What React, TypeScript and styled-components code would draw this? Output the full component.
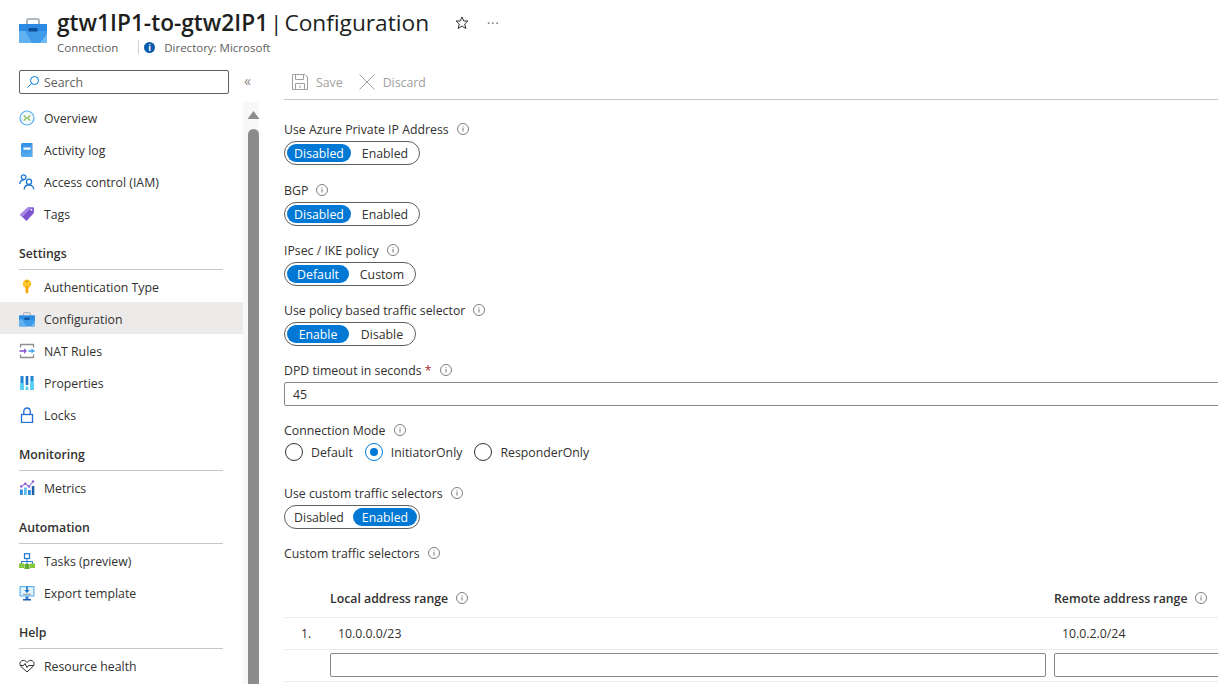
import React from "react";
import styled, { createGlobalStyle } from "styled-components";

const GlobalStyle = createGlobalStyle`
  html, body { margin: 0; padding: 0; background: #fff; }
  body {
    font-family: "Open Sans", "Noto Sans", sans-serif;
    font-size: 12.3px;
    color: #323130;
  }
  * { box-sizing: border-box; }
`;

const BriefcaseIcon = ({ size = 16 }: { size?: number }) => (
  <svg width={size} height={size} viewBox="0 0 28 28" fill="none">
    <path d="M8 9V4.200C8 3.500 8.500 3 9.200 3h9.600c.7 0 1.200.5 1.200 1.200V9" stroke="#9aa3ab" strokeWidth="1.600" />
    <rect x="0" y="8" width="28" height="19" rx="1.500" fill="#3f9bea" />
    <rect x="0" y="8" width="28" height="7" fill="#2a8ae4" />
    <path d="M0 15h6l7 12H1.500C.7 27 0 26.300 0 25.500z" fill="#62b2f2" />
    <path d="M21 27l7-9v7.500c0 .8-.7 1.500-1.500 1.500z" fill="#6fbaf4" />
    <rect x="9.500" y="12" width="9" height="3.500" fill="#0f4f97" />
  </svg>
);

const OverviewIcon = () => (
  <svg width="16" height="16" viewBox="0 0 16 16" fill="none">
    <circle cx="8" cy="8" r="7" stroke="#5aaef0" strokeWidth="1.200" fill="#f2f9fe" />
    <path d="M4.800 5.300L7.400 8 4.800 10.700" stroke="#7fba3c" strokeWidth="1.100" />
    <path d="M11.200 5.300L8.600 8l2.600 2.700" stroke="#7fba3c" strokeWidth="1.100" />
  </svg>
);

const LogIcon = () => (
  <svg width="16" height="16" viewBox="0 0 16 16">
    <defs>
      <linearGradient id="logFill" x1="0" y1="0" x2="0" y2="1">
        <stop offset="0" stopColor="#2f8fe4" />
        <stop offset="1" stopColor="#54aef2" />
      </linearGradient>
    </defs>
    <rect x="2" y="1" width="12" height="14" rx="1.500" fill="url(#logFill)" />
    <rect x="12.800" y="1.500" width="1.200" height="13" fill="#a9c6de" />
    <rect x="4.500" y="5.500" width="7" height="2.200" fill="#fff" />
  </svg>
);

const PeopleIcon = () => (
  <svg width="16" height="16" viewBox="0 0 16 16" fill="none" stroke="#1f78d8" strokeWidth="1.300">
    <circle cx="4.600" cy="3.200" r="2.300" />
    <path d="M.8 10c.2-2.300 1.600-4 3.800-4" />
    <circle cx="10" cy="7.800" r="2.600" />
    <path d="M5.200 15.500c0-2.800 2.100-4.500 4.800-4.500s4.800 1.700 4.800 4.500" />
  </svg>
);

const TagIcon = () => (
  <svg width="16" height="16" viewBox="0 0 16 16">
    <path d="M9 1.200h4.800c.6 0 1.100.5 1.100 1.100V7L7.500 15 .9 8.700z" fill="#7e54cf" />
    <path d="M.9 8.700L9 1.200l3 .3L3.500 11z" fill="#a98ae6" />
    <circle cx="12.300" cy="3.800" r="1" fill="#efe9fb" />
  </svg>
);

const KeyIcon = () => (
  <svg width="16" height="16" viewBox="0 0 16 16">
    <circle cx="8" cy="4.800" r="4.300" fill="#fdc62d" />
    <path d="M6.500 7h3v3l-.7.7.7.7v1.100L8 15l-1.500-2z" fill="#f5a800" />
    <rect x="6.700" y="1.800" width="2.600" height="1.200" rx=".6" fill="#b98b00" />
  </svg>
);

const NatIcon = () => (
  <svg width="16" height="16" viewBox="0 0 16 16" fill="none">
    <path d="M1.500 1.500h13M1.500 14.500h13M1.500 1v3.500M14.500 1v3.500M1.500 11.500V15M14.500 11.500V15" stroke="#8f8f8f" strokeWidth="1.300" />
    <path d="M.5 8h6" stroke="#8a5fd8" strokeWidth="1.700" />
    <path d="M5 5.300L8 8l-3 2.700z" fill="#8a5fd8" />
    <path d="M9.500 8h6" stroke="#46a8f0" strokeWidth="1.700" />
    <path d="M12.500 5.300L15.500 8l-3 2.700z" fill="#46a8f0" />
  </svg>
);

const BarsIcon = () => (
  <svg width="16" height="16" viewBox="0 0 16 16">
    <rect x="1.500" y="1" width="3" height="14" fill="#1b83d4" />
    <rect x="1.500" y="8" width="3" height="7" fill="#50d4f4" />
    <rect x="6.700" y="1" width="2.600" height="9" fill="#1b6ec2" />
    <rect x="6.700" y="11.500" width="2.600" height="3.500" fill="#50d4f4" />
    <rect x="11.500" y="1" width="3" height="14" fill="#1b83d4" />
    <rect x="11.500" y="6" width="3" height="9" fill="#50d4f4" />
  </svg>
);

const LockIcon = () => (
  <svg width="16" height="16" viewBox="0 0 16 16" fill="none" stroke="#1f6fd8" strokeWidth="1.300">
    <rect x="2.500" y="7.500" width="11" height="8" />
    <path d="M4.800 7.500V4.200a3.200 3.200 0 016.400 0v3.300" />
  </svg>
);

const MetricsIcon = () => (
  <svg width="16" height="16" viewBox="0 0 16 16">
    <rect x="1" y="9.500" width="2.800" height="5.500" fill="#2d8ad8" />
    <rect x="5" y="7.500" width="2.800" height="7.500" fill="#5ec0f0" />
    <rect x="9" y="10" width="2.800" height="5" fill="#2d8ad8" />
    <rect x="12.800" y="6" width="2.500" height="9" fill="#1a5fa8" />
    <path d="M2.200 6.500L6.200 3.700 10 6.500l4-5" stroke="#9a78dc" strokeWidth="1.100" fill="none" />
    <circle cx="2.200" cy="6.500" r="1.200" fill="#8a5fd8" />
    <circle cx="6.200" cy="3.700" r="1.200" fill="#8a5fd8" />
    <circle cx="10" cy="6.500" r="1.200" fill="#8a5fd8" />
    <circle cx="14" cy="1.500" r="1.200" fill="#8a5fd8" />
  </svg>
);

const TasksIcon = () => (
  <svg width="16" height="16" viewBox="0 0 16 16">
    <path d="M8 5.500V11M2.500 11V8.500h11V11" stroke="#1f78d8" fill="none" />
    <rect x="5.500" y="0.700" width="5" height="4.800" fill="#fff" stroke="#1f78d8" strokeWidth="1.200" />
    <rect x="0" y="10.500" width="5" height="4.500" fill="#86c83a" />
    <rect x="5.500" y="11" width="5" height="5" fill="#5ea82a" />
    <rect x="11" y="10.500" width="5" height="4.500" fill="#86c83a" />
  </svg>
);

const ExportIcon = () => (
  <svg width="16" height="16" viewBox="0 0 16 16">
    <rect x="0.500" y="1" width="15" height="10.500" fill="#5cb4ee" />
    <rect x="1.700" y="2.200" width="12.600" height="8.200" fill="#e4f3fc" />
    <path d="M8 1.500v5" stroke="#1b6ec2" strokeWidth="1.600" fill="none" />
    <path d="M5.300 5L8 8l2.700-3z" fill="#1b6ec2" />
    <rect x="4" y="8.800" width="8" height="1" fill="#8a949c" />
    <path d="M6.500 11.500h3V14h-3z" fill="#2a7fd0" />
    <rect x="4" y="14" width="8" height="1.500" fill="#1a5fa8" />
  </svg>
);

const HeartIcon = () => (
  <svg width="16" height="16" viewBox="0 0 16 16" fill="none" stroke="#323130" strokeWidth="1">
    <path d="M8 14L2 8.500C.3 6.700.6 3.800 2.600 2.800 4.600 1.800 6.800 2.600 8 4.500c1.200-1.900 3.400-2.700 5.400-1.700 2 1 2.300 3.900.6 5.700z" />
    <path d="M1 7.500h3.500l1.500-2 2 4 1.500-2h5.500" />
  </svg>
);

const SearchIcon = () => (
  <svg width="14" height="14" viewBox="0 0 14 14" fill="none" stroke="#0078d4" strokeWidth="1">
    <circle cx="8.500" cy="5.500" r="4" />
    <path d="M5.500 8.500L1.500 12.500" />
  </svg>
);

const InfoIcon = () => (
  <InfoGlyph width="12" height="12" viewBox="0 0 12 12" fill="none">
    <circle cx="6" cy="6" r="5.500" stroke="#605e5c" strokeWidth="0.800" />
    <rect x="5.500" y="5" width="1" height="3.500" fill="#7a7876" />
    <rect x="5.500" y="3.200" width="1" height="1" fill="#7a7876" />
  </InfoGlyph>
);

const navTop = [
  { label: "Overview", icon: <OverviewIcon /> },
  { label: "Activity log", icon: <LogIcon /> },
  { label: "Access control (IAM)", icon: <PeopleIcon /> },
  { label: "Tags", icon: <TagIcon /> },
];

const navSections = [
  {
    title: "Settings",
    items: [
      { label: "Authentication Type", icon: <KeyIcon /> },
      { label: "Configuration", icon: <BriefcaseIcon />, active: true },
      { label: "NAT Rules", icon: <NatIcon /> },
      { label: "Properties", icon: <BarsIcon /> },
      { label: "Locks", icon: <LockIcon /> },
    ],
  },
  { title: "Monitoring", items: [{ label: "Metrics", icon: <MetricsIcon /> }] },
  {
    title: "Automation",
    items: [
      { label: "Tasks (preview)", icon: <TasksIcon /> },
      { label: "Export template", icon: <ExportIcon /> },
    ],
  },
  { title: "Help", items: [{ label: "Resource health", icon: <HeartIcon /> }] },
];

const Toggle = ({ options, selected, width }: { options: string[]; selected: number; width: number }) => (
  <ToggleWrap $width={width}>
    {options.map((option, i) => (
      <ToggleOption key={option} $on={i === selected}>
        {option}
      </ToggleOption>
    ))}
  </ToggleWrap>
);

const FieldLabel = ({ children }: { children: React.ReactNode }) => (
  <LabelRow>
    <span>{children}</span>
    <InfoIcon />
  </LabelRow>
);

export default function App() {
  return (
    <Page>
      <GlobalStyle />
      <Header>
        <HeaderIcon>
          <BriefcaseIcon size={28} />
        </HeaderIcon>
        <HeaderText>
          <TitleRow>
            <Title>
              <strong>gtw1IP1-to-gtw2IP1</strong> | Configuration
            </Title>
            <TitleAction>
              <svg width="14" height="14" viewBox="0 0 14 14" fill="none" stroke="#323130" strokeWidth="1">
                <path d="M7 1l1.800 4h4.200L9.700 8l1.100 4.500L7 10l-3.800 2.500L4.300 8 1 5h4.200z" />
              </svg>
            </TitleAction>
            <MoreDots>···</MoreDots>
          </TitleRow>
          <SubRow>
            <span>Connection</span>
            <SubDivider />
            <DirectoryBadge>i</DirectoryBadge>
            <span>Directory: Microsoft</span>
          </SubRow>
        </HeaderText>
      </Header>
      <Body>
        <Sidebar>
          <SearchRow>
            <SearchBox>
              <SearchIcon />
              <span>Search</span>
            </SearchBox>
            <Collapse>«</Collapse>
          </SearchRow>
          <NavArea>
            <Nav>
              {navTop.map((item) => (
                <NavRow key={item.label}>
                  {item.icon}
                  <span>{item.label}</span>
                </NavRow>
              ))}
              {navSections.map((section) => (
                <React.Fragment key={section.title}>
                  <SectionHeading>{section.title}</SectionHeading>
                  {section.items.map((item) => (
                    <NavRow key={item.label} $active={"active" in item}>
                      {item.icon}
                      <span>{item.label}</span>
                    </NavRow>
                  ))}
                </React.Fragment>
              ))}
            </Nav>
            <Scrollbar>
              <ScrollArrow />
              <ScrollThumb />
            </Scrollbar>
          </NavArea>
        </Sidebar>
        <Main>
          <Toolbar>
            <ToolButton>
              <svg width="16" height="16" viewBox="0 0 16 16" fill="none" stroke="#a19f9d" strokeWidth="1">
                <path d="M.5.500h12.500l2.500 2.500v12.500H.5z" />
                <path d="M3.500.5v5h8v-5M3.500 15.500v-6h9v6M8 11.500v2.500" />
              </svg>
              <span>Save</span>
            </ToolButton>
            <ToolButton>
              <svg width="16" height="16" viewBox="0 0 16 16" fill="none" stroke="#a19f9d" strokeWidth="1">
                <path d="M.5.500l15 15M15.500.5l-15 15" />
              </svg>
              <span>Discard</span>
            </ToolButton>
          </Toolbar>
          <Form>
            <Field $gap={15}>
              <FieldLabel>Use Azure Private IP Address</FieldLabel>
              <Toggle options={["Disabled", "Enabled"]} selected={0} width={136} />
            </Field>
            <Field>
              <FieldLabel>BGP</FieldLabel>
              <Toggle options={["Disabled", "Enabled"]} selected={0} width={136} />
            </Field>
            <Field>
              <FieldLabel>IPsec / IKE policy</FieldLabel>
              <Toggle options={["Default", "Custom"]} selected={0} width={132} />
            </Field>
            <Field>
              <FieldLabel>Use policy based traffic selector</FieldLabel>
              <Toggle options={["Enable", "Disable"]} selected={0} width={132} />
            </Field>
            <Field>
              <FieldLabel>
                DPD timeout in seconds <Required>*</Required>
              </FieldLabel>
              <TextBox>45</TextBox>
            </Field>
            <Field $gap={21}>
              <FieldLabel>Connection Mode</FieldLabel>
              <RadioGroup>
                <RadioItem>
                  <RadioCircle />
                  <span>Default</span>
                </RadioItem>
                <RadioItem>
                  <RadioCircle $on />
                  <span>InitiatorOnly</span>
                </RadioItem>
                <RadioItem>
                  <RadioCircle />
                  <span>ResponderOnly</span>
                </RadioItem>
              </RadioGroup>
            </Field>
            <Field>
              <FieldLabel>Use custom traffic selectors</FieldLabel>
              <Toggle options={["Disabled", "Enabled"]} selected={1} width={136} />
            </Field>
            <Field $gap={17}>
              <FieldLabel>Custom traffic selectors</FieldLabel>
            </Field>
            <TableHead>
              <span />
              <HeadCell>
                Local address range <InfoIcon />
              </HeadCell>
              <HeadCell>
                Remote address range <InfoIcon />
              </HeadCell>
            </TableHead>
            <TableRow>
              <IndexCell>1.</IndexCell>
              <ValueCell>10.0.0.0/23</ValueCell>
              <ValueCell>10.0.2.0/24</ValueCell>
            </TableRow>
            <InputRow>
              <span />
              <TextBox />
              <TextBox />
            </InputRow>
          </Form>
        </Main>
      </Body>
    </Page>
  );
}

const Page = styled.div`
  width: 1218px;
  height: 684px;
  overflow: hidden;
  display: flex;
  flex-direction: column;
`;

const Header = styled.header`
  height: 68px;
  display: flex;
  padding: 0 0 0 19px;
`;

const HeaderIcon = styled.div`
  width: 38px;
  padding-top: 16px;
`;

const HeaderText = styled.div`
  display: flex;
  flex-direction: column;
`;

const TitleRow = styled.div`
  display: flex;
  align-items: center;
  height: 39px;
  padding-top: 7px;
`;

const Title = styled.h1`
  margin: 0;
  font-size: 22.7px;
  font-weight: 400;
  line-height: 30px;
  word-spacing: -4px;
  color: #201f1e;
  white-space: nowrap;
  strong {
    font-weight: 600;
  }
`;

const TitleAction = styled.span`
  display: flex;
  margin-left: 26px;
`;

const MoreDots = styled.span`
  margin-left: 18px;
  font-size: 12px;
  letter-spacing: 1px;
  color: #605e5c;
`;

const SubRow = styled.div`
  display: flex;
  align-items: center;
  height: 16px;
  font-size: 11.5px;
  color: #605e5c;
`;

const SubDivider = styled.span`
  width: 1px;
  height: 14px;
  margin: 0 5px 0 20px;
  background: #d2d0ce;
`;

const DirectoryBadge = styled.span`
  width: 11px;
  height: 11px;
  margin-right: 9px;
  border-radius: 50%;
  background: #0b5cad;
  color: #fff;
  font-size: 9px;
  font-weight: 700;
  line-height: 11px;
  text-align: center;
`;

const Body = styled.div`
  flex: 1;
  display: flex;
  min-height: 0;
`;

const Sidebar = styled.aside`
  width: 259px;
  flex: none;
  display: flex;
  flex-direction: column;
`;

const SearchRow = styled.div`
  height: 34px;
  flex: none;
  display: flex;
  padding: 2px 0 0 19px;
`;

const SearchBox = styled.div`
  width: 210px;
  height: 24px;
  display: flex;
  align-items: center;
  gap: 4px;
  padding-left: 6px;
  border: 1px solid #605e5c;
  border-radius: 2px;
  color: #605e5c;
`;

const Collapse = styled.span`
  margin-left: 15px;
  font-size: 14px;
  line-height: 22px;
  color: #8a8886;
`;

const NavArea = styled.div`
  flex: 1;
  display: flex;
  min-height: 0;
`;

const Nav = styled.nav`
  width: 243px;
  flex: none;
`;

const NavRow = styled.div<{ $active?: boolean }>`
  height: 32px;
  display: flex;
  align-items: center;
  gap: 9px;
  padding: ${(props) => (props.$active ? "2px 0 0 19px" : "0 0 0 19px")};
  margin: ${(props) => (props.$active ? "-1px 0 1px" : "0")};
  background: ${(props) => (props.$active ? "#edebe9" : "transparent")};
  white-space: nowrap;
`;

const SectionHeading = styled.div`
  width: 204px;
  height: 40px;
  margin: 0 0 1px 19px;
  padding-top: 15px;
  border-bottom: 1px solid #c8c6c4;
  font-weight: 600;
  line-height: 18px;
`;

const Scrollbar = styled.div`
  width: 16px;
  flex: none;
  display: flex;
  flex-direction: column;
  align-items: flex-end;
  background: #f8f8f8;
`;

const ScrollArrow = styled.div`
  width: 11px;
  height: 27px;
  &::before {
    content: "";
    display: block;
    margin-top: 9px;
    border-left: 6px solid transparent;
    border-right: 6px solid transparent;
    border-bottom: 8px solid #8c8c8c;
    width: 0;
    transform: translateX(-0.5px);
  }
`;

const ScrollThumb = styled.div`
  width: 11px;
  flex: 1;
  border-radius: 6px 6px 0 0;
  background: #8c8c8c;
`;

const Main = styled.main`
  flex: 1;
  min-width: 0;
  overflow: hidden;
  margin-left: 25px;
`;

const Toolbar = styled.div`
  height: 32px;
  display: flex;
  align-items: center;
  gap: 16px;
  padding: 0 0 3px 8px;
  border-bottom: 1px solid #c8c6c4;
  color: #a19f9d;
`;

const ToolButton = styled.div`
  display: flex;
  align-items: center;
  gap: 8px;
`;

const Form = styled.div`
  width: 960px;
  padding-top: 19px;
`;

const Field = styled.div<{ $gap?: number }>`
  margin-bottom: ${(props) => props.$gap ?? 14}px;
`;

const LabelRow = styled.div`
  height: 20px;
  margin-bottom: 2px;
  display: flex;
  align-items: center;
  gap: 8px;
`;

const InfoGlyph = styled.svg`
  flex: none;
`;

const Required = styled.span`
  color: #a4262c;
`;

const ToggleWrap = styled.div<{ $width: number }>`
  width: ${(props) => props.$width}px;
  height: 24px;
  display: grid;
  grid-template-columns: 1fr 1fr;
  gap: 2px;
  padding: 2px;
  border: 1px solid #605e5c;
  border-radius: 12px;
`;

const ToggleOption = styled.div<{ $on?: boolean }>`
  height: 18px;
  border-radius: 9px;
  background: ${(props) => (props.$on ? "#0078d4" : "transparent")};
  color: ${(props) => (props.$on ? "#fff" : "#323130")};
  line-height: 20px;
  text-align: center;
`;

const TextBox = styled.div`
  height: 24px;
  padding-left: 8px;
  border: 1px solid #8a8886;
  border-radius: 2px;
  line-height: 24px;
`;

const RadioGroup = styled.div`
  display: flex;
  gap: 12px;
  padding-left: 1px;
`;

const RadioItem = styled.div`
  height: 20px;
  display: flex;
  align-items: center;
  gap: 8px;
`;

const RadioCircle = styled.span<{ $on?: boolean }>`
  width: 18px;
  height: 18px;
  display: flex;
  align-items: center;
  justify-content: center;
  border: 1px solid ${(props) => (props.$on ? "#0078d4" : "#323130")};
  border-radius: 50%;
  &::after {
    content: "";
    display: ${(props) => (props.$on ? "block" : "none")};
    width: 8px;
    height: 8px;
    border-radius: 50%;
    background: #0078d4;
  }
`;

const TableHead = styled.div`
  height: 38px;
  display: grid;
  grid-template-columns: 38px 716px 1fr;
  column-gap: 8px;
  border-bottom: 1px solid #edebe9;
  padding-top: 8px;
`;

const HeadCell = styled.div`
  display: flex;
  align-items: center;
  gap: 8px;
  height: 20px;
  font-weight: 600;
`;

const TableRow = styled.div`
  height: 32px;
  display: grid;
  grid-template-columns: 38px 716px 1fr;
  column-gap: 8px;
  align-items: center;
  border-bottom: 1px solid #edebe9;
`;

const InputRow = styled(TableRow)`
  align-items: start;
  padding-top: 3px;
`;

const IndexCell = styled.div`
  padding-left: 17px;
`;

const ValueCell = styled.div`
  padding-left: 8px;
`;
